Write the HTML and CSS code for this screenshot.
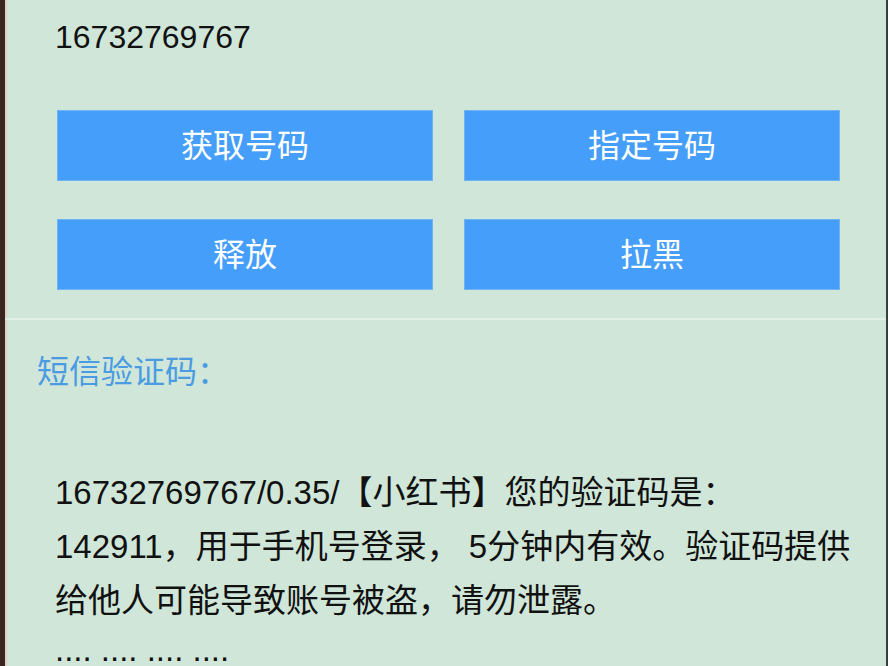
FILE: index.html
```html
<!DOCTYPE html>
<html lang="zh-CN">
<head>
<meta charset="utf-8">
<title>短信验证码</title>
<link rel="stylesheet" href="styles.css">
</head>
<body>
<div class="screen">
  <div class="phone">16732769767</div>
  <div class="actions">
    <button class="btn">获取号码</button>
    <button class="btn">指定号码</button>
    <button class="btn">释放</button>
    <button class="btn">拉黑</button>
  </div>
  <div class="divider"></div>
  <div class="sms-label">短信验证码：</div>
  <div class="sms">
    <p class="sms-text">16732769767/0.35/【小红书】您的验证码是：142911，用于手机号登录， 5分钟内有效。验证码提供给他人可能导致账号被盗，请勿泄露。</p>
    <p class="sms-tail">.... .... .... ....</p>
  </div>
</div>
</body>
</html>
```

FILE: styles.css
```css
html, body {
  margin: 0;
  padding: 0;
  background: #cfe6d8;
}
body {
  width: 888px;
  height: 666px;
  overflow: hidden;
  font-family: "Liberation Sans", "Noto Sans CJK SC", sans-serif;
  color: #111;
}
.screen {
  box-sizing: border-box;
  width: 888px;
  height: 666px;
  overflow: hidden;
  border-left: 5px solid #3b2521;
  border-right: 2px solid #34413c;
  background: linear-gradient(to right, #e6cbc4 0, #e6cbc4 2px, #cfe6d8 2px);
}
.phone {
  margin-top: 17px;
  padding-left: 50px;
  font-size: 32px;
  line-height: 40px;
}
.actions {
  display: grid;
  grid-template-columns: 376px 376px;
  grid-auto-rows: 71px;
  column-gap: 31px;
  row-gap: 38px;
  margin: 53px 0 0 52px;
}
.btn {
  margin: 0;
  padding: 0;
  border: 1px solid #6fb3f2;
  background: #459ef9;
  color: #fff;
  font-family: "Liberation Sans", "Noto Sans CJK SC", sans-serif;
  font-size: 32px;
  line-height: 1;
}
.divider {
  margin-top: 28px;
  height: 2px;
  background: #e2efe7;
}
.sms-label {
  margin-top: 32px;
  padding-left: 32px;
  font-size: 32px;
  line-height: 40px;
  color: #4b9be3;
}
.sms {
  margin-top: 74px;
  padding: 0 21px 0 50px;
  font-size: 33px;
}
.sms-text {
  margin: 0;
  line-height: 54px;
}
.sms-tail {
  margin: 0;
  line-height: 44px;
}
```
